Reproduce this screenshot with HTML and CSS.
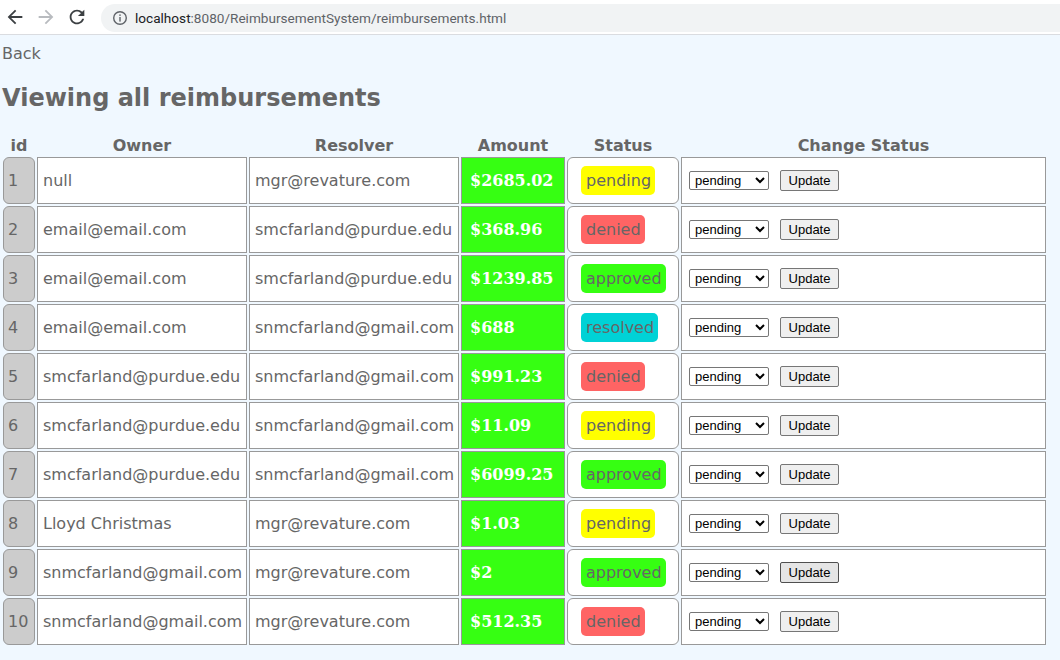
FILE: index.html
```html
<!DOCTYPE html>
<html lang="en">
<head>
<meta charset="utf-8">
<title>Reimbursements</title>
<link rel="stylesheet" href="styles.css">
</head>
<body>
<header class="chrome">
  <div class="nav">
    <svg class="ic back" viewBox="0 0 24 24"><path d="M20 11H7.83l5.59-5.59L12 4l-8 8 8 8 1.41-1.41L7.83 13H20v-2z"/></svg>
    <svg class="ic fwd" viewBox="0 0 24 24"><path d="M12 4l-1.41 1.41L16.170 11H4v2h12.17l-5.58 5.59L12 20l8-8z"/></svg>
    <svg class="ic reload" viewBox="0 0 24 24"><path d="M17.65 6.35C16.2 4.9 14.21 4 12 4c-4.420 0-7.99 3.58-7.99 8s3.57 8 7.99 8c3.73 0 6.84-2.55 7.73-6h-2.08c-.82 2.33-3.04 4-5.65 4-3.31 0-6-2.690-6-6s2.69-6 6-6c1.66 0 3.14.69 4.22 1.78L13 11h7V4l-2.35 2.35z"/></svg>
  </div>
  <div class="omnibox">
    <svg class="info" viewBox="0 0 16 16"><circle cx="8" cy="8" r="6.3" fill="none" stroke="#5f6368" stroke-width="1.4"/><rect x="7.3" y="7" width="1.4" height="4.6" fill="#5f6368"/><rect x="7.3" y="4.4" width="1.4" height="1.5" fill="#5f6368"/></svg>
    <span class="url"><span class="host">localhost</span>:8080/ReimbursementSystem/reimbursements.html</span>
  </div>
</header>
<main class="page">
  <div class="backlink"><a href="#">Back</a></div>
  <h2 class="title">Viewing all reimbursements</h2>
  <table class="grid">
    <colgroup>
      <col class="c-id"><col class="c-owner"><col class="c-res"><col class="c-amt"><col class="c-stat"><col class="c-chg">
    </colgroup>
    <thead>
      <tr><th>id</th><th>Owner</th><th>Resolver</th><th>Amount</th><th>Status</th><th>Change Status</th></tr>
    </thead>
    <tbody>
      <tr><td class="id">1</td><td>null</td><td>mgr@revature.com</td><td class="amt">$2685.02</td><td class="stat"><span class="badge pending">pending</span></td><td class="chg"><div class="ctl"><select><option>pending</option><option>approved</option><option>denied</option><option>resolved</option></select><button>Update</button></div></td></tr>
      <tr><td class="id">2</td><td>email@email.com</td><td>smcfarland@purdue.edu</td><td class="amt">$368.96</td><td class="stat"><span class="badge denied">denied</span></td><td class="chg"><div class="ctl"><select><option>pending</option><option>approved</option><option>denied</option><option>resolved</option></select><button>Update</button></div></td></tr>
      <tr><td class="id">3</td><td>email@email.com</td><td>smcfarland@purdue.edu</td><td class="amt">$1239.85</td><td class="stat"><span class="badge approved">approved</span></td><td class="chg"><div class="ctl"><select><option>pending</option><option>approved</option><option>denied</option><option>resolved</option></select><button>Update</button></div></td></tr>
      <tr><td class="id">4</td><td>email@email.com</td><td>snmcfarland@gmail.com</td><td class="amt">$688</td><td class="stat"><span class="badge resolved">resolved</span></td><td class="chg"><div class="ctl"><select><option>pending</option><option>approved</option><option>denied</option><option>resolved</option></select><button>Update</button></div></td></tr>
      <tr><td class="id">5</td><td>smcfarland@purdue.edu</td><td>snmcfarland@gmail.com</td><td class="amt">$991.23</td><td class="stat"><span class="badge denied">denied</span></td><td class="chg"><div class="ctl"><select><option>pending</option><option>approved</option><option>denied</option><option>resolved</option></select><button>Update</button></div></td></tr>
      <tr><td class="id">6</td><td>smcfarland@purdue.edu</td><td>snmcfarland@gmail.com</td><td class="amt">$11.09</td><td class="stat"><span class="badge pending">pending</span></td><td class="chg"><div class="ctl"><select><option>pending</option><option>approved</option><option>denied</option><option>resolved</option></select><button>Update</button></div></td></tr>
      <tr><td class="id">7</td><td>smcfarland@purdue.edu</td><td>snmcfarland@gmail.com</td><td class="amt">$6099.25</td><td class="stat"><span class="badge approved">approved</span></td><td class="chg"><div class="ctl"><select><option>pending</option><option>approved</option><option>denied</option><option>resolved</option></select><button>Update</button></div></td></tr>
      <tr><td class="id">8</td><td>Lloyd Christmas</td><td>mgr@revature.com</td><td class="amt">$1.03</td><td class="stat"><span class="badge pending">pending</span></td><td class="chg"><div class="ctl"><select><option>pending</option><option>approved</option><option>denied</option><option>resolved</option></select><button>Update</button></div></td></tr>
      <tr><td class="id">9</td><td>snmcfarland@gmail.com</td><td>mgr@revature.com</td><td class="amt">$2</td><td class="stat"><span class="badge approved">approved</span></td><td class="chg"><div class="ctl"><select><option>pending</option><option>approved</option><option>denied</option><option>resolved</option></select><button class="hover">Update</button></div></td></tr>
      <tr><td class="id">10</td><td>snmcfarland@gmail.com</td><td>mgr@revature.com</td><td class="amt">$512.35</td><td class="stat"><span class="badge denied">denied</span></td><td class="chg"><div class="ctl"><select><option>pending</option><option>approved</option><option>denied</option><option>resolved</option></select><button>Update</button></div></td></tr>
    </tbody>
  </table>
</main>
</body>
</html>
```
FILE: styles.css
```css
* { box-sizing: border-box; }
html, body { margin: 0; padding: 0; }
body {
  background: #f0f8ff;
  font-family: "DejaVu Sans", Verdana, sans-serif;
  color: #666;
  font-size: 16px;
}
.chrome {
  height: 35px;
  background: #fff;
  border-bottom: 1px solid #dadce0;
  display: flex;
  align-items: center;
}
.nav {
  display: flex;
  align-items: center;
  width: 101px;
  padding-left: 4px;
  gap: 9px;
}
.ic { width: 22px; height: 22px; }
.back { fill: #3c4043; }
.fwd { fill: #b8bbbf; }
.reload { fill: #3c4043; }
.omnibox {
  flex: 1;
  height: 28px;
  margin-top: 1px;
  background: #f1f3f4;
  border-radius: 14px 0 0 14px;
  display: flex;
  align-items: center;
  padding-left: 11px;
}
.info { width: 16px; height: 16px; }
.url {
  margin-left: 7px;
  font-family: Roboto, "Noto Sans", sans-serif;
  font-size: 13.6px;
  color: #5f6368;
}
.host { color: #202124; }
.page { padding: 9px 0 0 0; }
.backlink { padding-left: 2px; line-height: 19px; }
.backlink a { color: #666; text-decoration: none; }
.title {
  font-size: 24px;
  font-weight: bold;
  margin: 21px 0 20px 2px;
  line-height: 28px;
}
.grid {
  border-collapse: separate;
  border-spacing: 2px;
  table-layout: fixed;
  margin-left: 1px;
  width: 1047px;
}
.c-id { width: 32px; }
.c-owner { width: 210px; }
.c-res { width: 210px; }
.c-amt { width: 104px; }
.c-stat { width: 112px; }
.c-chg { width: 365px; }
.grid th {
  font-weight: bold;
  padding: 2px 0 0;
  line-height: 19px;
  text-align: center;
  white-space: nowrap;
}
.grid td {
  height: 47px;
  border: 1px solid #999;
  background: #fff;
  padding: 0 5px;
  vertical-align: middle;
  white-space: nowrap;
  line-height: 19px;
}
.grid td.id {
  background: #ccc;
  border-radius: 6px;
  padding: 0 4px;
}
.grid td.amt {
  background: #36ff12;
  color: #fff;
  font-family: "DejaVu Serif", Georgia, serif;
  font-weight: bold;
  padding: 0 8px;
}
.grid td.stat {
  border-radius: 6px;
  padding: 0 13px;
}
.badge {
  display: inline-block;
  padding: 5px 4px 5px 5px;
  border-radius: 5px;
  color: #666;
}
.pending { background: #ffff00; }
.denied { background: #ff6464; }
.approved { background: #36ff12; }
.resolved { background: #00d2d6; }
.grid td.chg { padding: 0 7px; }
.ctl {
  display: flex;
  align-items: center;
  gap: 11px;
}
.ctl select {
  width: 80px;
  height: 19px;
  font-family: "Liberation Sans", Arial, sans-serif;
  font-size: 13px;
  color: #000;
  background: #fff;
  border: 1px solid #767676;
  border-radius: 2px;
  padding: 0 0 0 1px;
}
.ctl button {
  height: 21px;
  width: 59px;
  font-family: "Liberation Sans", Arial, sans-serif;
  font-size: 13px;
  color: #000;
  background: #efefef;
  border: 1px solid #767676;
  border-radius: 2px;
  padding: 0 6px;
}
.ctl button.hover { background: #e5e5e5; border-color: #4f4f4f; }
```
